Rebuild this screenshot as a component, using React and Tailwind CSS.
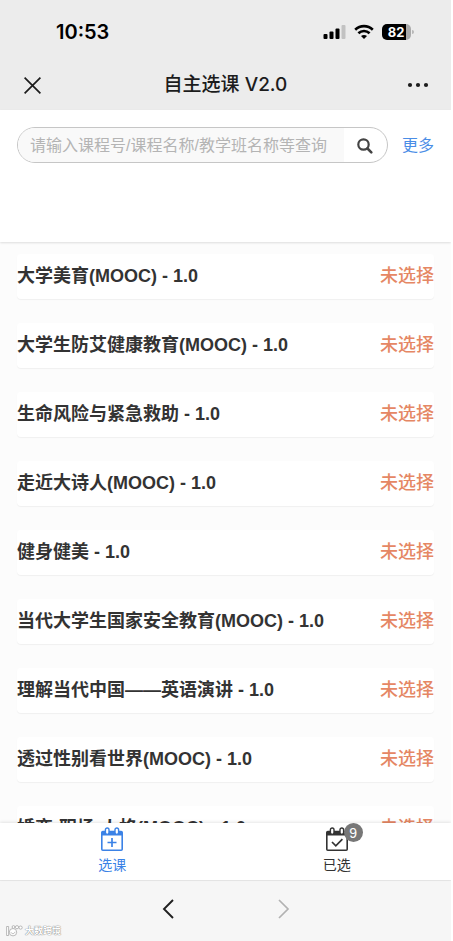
import React from 'react';

const courses = [
  '大学美育(MOOC) - 1.0',
  '大学生防艾健康教育(MOOC) - 1.0',
  '生命风险与紧急救助 - 1.0',
  '走近大诗人(MOOC) - 1.0',
  '健身健美 - 1.0',
  '当代大学生国家安全教育(MOOC) - 1.0',
  '理解当代中国——英语演讲 - 1.0',
  '透过性别看世界(MOOC) - 1.0',
  '婚恋·职场·人格(MOOC) - 1.0',
];

function StatusBar() {
  return (
    <div className="flex h-16 items-center justify-between pl-14 pr-[37px] text-black">
      <time className="font-['Inter','Liberation_Sans',sans-serif] text-[20px] leading-6 font-semibold">10:53</time>
      <div className="flex items-center gap-2">
        <svg width="23" height="16" viewBox="0 0 23 16" aria-hidden="true">
          <rect x="0.5" y="10" width="4" height="5" rx="1" />
          <rect x="6.5" y="7.5" width="4" height="7.5" rx="1" />
          <rect x="12.5" y="4.5" width="4" height="10.5" rx="1" />
          <rect x="18.5" y="1" width="4" height="14" rx="1" fill="#c2c2c2" />
        </svg>
        <svg width="20" height="16" viewBox="0 0 20 16" fill="none" stroke="#000" strokeWidth="2.6" aria-hidden="true">
          <path d="M1.2 5.7C6.2.9 13.8.9 18.8 5.7" />
          <path d="M4.4 9.3c3.2-3 8-3 11.2 0" />
          <path d="M10 15l-3-3c1.7-1.5 4.3-1.5 6 0z" fill="#000" stroke="none" />
        </svg>
        <div className="flex items-center gap-px">
          <div className="flex h-4 w-[29px] items-center justify-center rounded-[5px] bg-linear-to-r from-black from-84% to-[#aaaaaa] to-84% pr-px font-['Inter','Liberation_Sans',sans-serif] text-[13px] leading-4 font-bold text-white">
            82
          </div>
          <div className="h-1 w-0.5 rounded-r-full bg-[#b8b8b8]" />
        </div>
      </div>
    </div>
  );
}

function TitleBar() {
  return (
    <div className="grid h-[46px] grid-cols-[1fr_auto_1fr] items-center px-6 pb-1">
      <button type="button" aria-label="关闭" className="justify-self-start">
        <svg width="17" height="17" viewBox="0 0 17 17" stroke="#1c1c1c" strokeWidth="1.7" fill="none">
          <path d="M.6.6l15.8 15.8M16.4.6L.6 16.4" />
        </svg>
      </button>
      <h1 className="font-['Inter','Noto_Sans_CJK_SC',sans-serif] text-[19px] leading-6 font-medium text-[#1c1c1c]">
        自主选课 V2.0
      </h1>
      <button type="button" aria-label="更多操作" className="-mr-0.5 justify-self-end">
        <svg width="22" height="6" viewBox="0 0 22 6" fill="#1c1c1c">
          <circle cx="3" cy="3" r="2.1" />
          <circle cx="11" cy="3" r="2.1" />
          <circle cx="19" cy="3" r="2.1" />
        </svg>
      </button>
    </div>
  );
}

function SearchPanel() {
  return (
    <section className="z-10 h-[132px] shrink-0 bg-white px-[17px] pt-[17px] shadow-[0_1px_2px_rgba(0,0,0,0.12)]">
      <form className="flex items-center gap-[14px]" onSubmit={(e) => e.preventDefault()}>
        <div className="flex h-9 min-w-0 flex-1 overflow-hidden rounded-full border border-[#c6c6c6] bg-white">
          <input
            type="search"
            aria-label="查询课程"
            placeholder="请输入课程号/课程名称/教学班名称等查询"
            className="min-w-0 flex-1 bg-[#f9f9f9] pt-0.5 pl-3 text-[16px] text-[#333333] outline-none placeholder:text-[#b4b4b4]"
          />
          <button type="submit" aria-label="查询" className="flex w-[43px] items-center justify-center pt-0.5">
            <svg width="16" height="16" viewBox="0 0 16 16" fill="none" stroke="#444444" aria-hidden="true">
              <circle cx="6.5" cy="6.5" r="5.2" strokeWidth="2.2" />
              <path d="M10.5 10.5l3.8 3.8" strokeWidth="2.6" strokeLinecap="round" />
            </svg>
          </button>
        </div>
        <a href="#more" className="pt-0.5 text-[16px] leading-6 text-[#4a8de6]">更多</a>
      </form>
    </section>
  );
}

function CourseList() {
  return (
    <main className="min-h-0 flex-1 overflow-hidden bg-[#fcfcfc] px-[17px] pt-3">
      <ul className="flex flex-col gap-6">
        {courses.map((name) => (
          <li
            key={name}
            className="flex h-[45px] shrink-0 items-center justify-between rounded bg-white pb-0.5 shadow-[0_1px_1px_rgba(0,0,0,0.05)]"
          >
            <h2 className="text-[18px] leading-6 font-bold text-[#333333]">{name}</h2>
            <span className="text-[18px] leading-6 font-medium text-[#e58764]">未选择</span>
          </li>
        ))}
      </ul>
    </main>
  );
}

function CalendarIcon({ children }) {
  return (
    <svg width="22" height="24" viewBox="0 0 22 24" fill="none" stroke="currentColor" aria-hidden="true">
      <rect x="0.8" y="4.5" width="20.4" height="18.7" rx="1" strokeWidth="1.6" />
      <path d="M1 4.5h20v4H1z" fill="currentColor" stroke="none" />
      <rect x="4.4" y="1" width="3.6" height="6.4" rx="1.8" fill="#fff" strokeWidth="1.4" />
      <rect x="14" y="1" width="3.6" height="6.4" rx="1.8" fill="#fff" strokeWidth="1.4" />
      {children}
    </svg>
  );
}

function TabBar() {
  return (
    <nav className="z-10 grid h-[57px] shrink-0 grid-cols-2 bg-white pr-0.5 shadow-[0_-1px_3px_rgba(0,0,0,0.1)]">
      <a href="#select" className="flex flex-col items-center pt-1 text-[#3b82e6]">
        <CalendarIcon>
          <path d="M11 11v9M6.5 15.5h9" strokeWidth="1.7" />
        </CalendarIcon>
        <span className="pt-1 text-[14px] leading-5">选课</span>
      </a>
      <a href="#selected" className="flex flex-col items-center pt-1 text-[#333333]">
        <span className="relative">
          <CalendarIcon>
            <path d="M6 15l3.8 3.8 6.6-6.6" strokeWidth="1.7" />
          </CalendarIcon>
          <span className="absolute -top-1 left-[18px] flex size-[19px] items-center justify-center rounded-full bg-[#777777] text-[14px] leading-none text-white">
            9
          </span>
        </span>
        <span className="pt-1 text-[14px] leading-5">已选</span>
      </a>
    </nav>
  );
}

function BrowserBar() {
  return (
    <footer className="relative flex h-[61px] shrink-0 items-center justify-center gap-[104px] border-t border-[#e8e8e8] bg-[#f6f6f6] pb-1">
      <button type="button" aria-label="后退">
        <svg width="12" height="20" viewBox="0 0 12 20" fill="none" stroke="#202020" strokeWidth="1.9">
          <path d="M11 1L2 10l9 9" />
        </svg>
      </button>
      <button type="button" aria-label="前进">
        <svg width="12" height="20" viewBox="0 0 12 20" fill="none" stroke="#b2b2b2" strokeWidth="1.7">
          <path d="M1 1l9 9-9 9" />
        </svg>
      </button>
      <div className="absolute bottom-1 left-1.5 flex items-center gap-0.5 text-white">
        <svg width="17" height="12" viewBox="0 0 17 12" fill="#fff" stroke="#a8a8a8" strokeWidth="0.8" aria-hidden="true">
          <path d="M.6 1.5h2v9h-2z" />
          <circle cx="7" cy="7.2" r="3.7" />
          <path d="M5 7.2c.6 2 3.4 2 4-.4" fill="none" />
          <circle cx="7.5" cy="2" r="1.4" />
          <circle cx="11" cy="2.2" r="1.6" />
          <circle cx="14.6" cy="2.6" r="1.6" />
        </svg>
        <span className="text-[9px] leading-3 font-bold [text-shadow:0_0_1px_#777,0_0_1px_#888]">大数跨境</span>
      </div>
    </footer>
  );
}

export default function App() {
  return (
    <div className="h-screen bg-white pr-0.5 font-['Liberation_Sans','Noto_Sans_CJK_SC',sans-serif]">
      <div className="flex h-full flex-col overflow-hidden">
        <header className="shrink-0 bg-[#ececec]">
          <StatusBar />
          <TitleBar />
        </header>
        <SearchPanel />
        <CourseList />
        <TabBar />
        <BrowserBar />
      </div>
    </div>
  );
}
